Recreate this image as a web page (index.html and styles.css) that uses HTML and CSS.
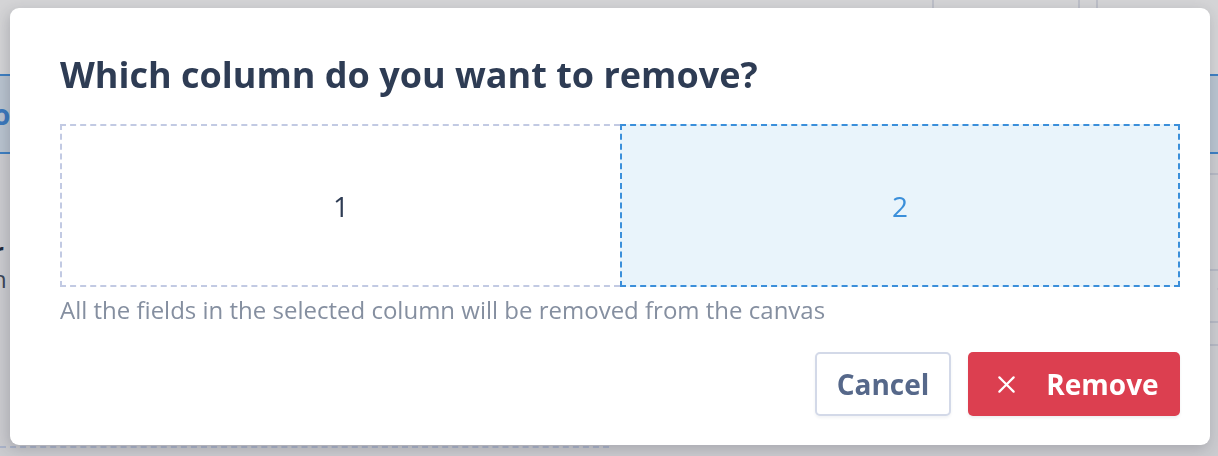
FILE: index.html
```html
<!DOCTYPE html>
<html lang="en">
<head>
<meta charset="utf-8">
<title>Remove column</title>
<link rel="stylesheet" href="styles.css">
</head>
<body>
<div class="page">
  <div class="toprow">
    <div class="cell c1"></div>
    <div class="cell c2"></div>
    <div class="cell c3"></div>
    <div class="cell c4"></div>
  </div>
  <div class="band"><span class="band-text">o</span></div>
  <div class="lower">
    <div class="left-pane">
      <span class="strong">r</span>
      <span class="light">h</span>
    </div>
    <div class="right-pane">
      <div class="row r1"></div>
      <div class="row r2"></div>
      <div class="row r3"><span class="q">?</span></div>
      <div class="row r4"></div>
    </div>
  </div>
</div>

<div class="modal" role="dialog" aria-labelledby="title">
  <h1 id="title" class="modal-title">Which column do you want to remove?</h1>
  <div class="columns">
    <button class="col-option">1</button>
    <button class="col-option selected">2</button>
  </div>
  <p class="hint">All the fields in the selected column will be removed from the canvas</p>
  <div class="actions">
    <button class="btn btn-cancel">Cancel</button>
    <button class="btn btn-remove">
      <svg class="x-icon" viewBox="0 0 20 20" width="19" height="19" aria-hidden="true">
        <path d="M2.5 2.5 L17.5 17.5 M17.5 2.5 L2.5 17.5" stroke="currentColor" stroke-width="2.3" stroke-linecap="round" fill="none"/>
      </svg>
      <span>Remove</span>
    </button>
  </div>
</div>
</body>
</html>
```

FILE: styles.css
```css
* { box-sizing: border-box; }

html, body {
  margin: 0;
  padding: 0;
  height: 100%;
}

body {
  background: #d4d4d6;
  font-family: "Open Sans", "Noto Sans", "Liberation Sans", sans-serif;
  overflow: hidden;
}

/* ---------- backdrop page (dimmed) ---------- */
.page {
  height: 456px;
  display: flex;
  flex-direction: column;
}

.toprow {
  height: 74px;
  display: flex;
}
.cell { border-right: 2px solid #bdbfc8; height: 100%; }
.c1 { width: 934px; }
.c2 { width: 146px; }
.c3 { width: 18px; }
.c4 { flex: 1; border-right: none; }

.band {
  height: 80px;
  background: #b9c3cf;
  border-top: 2px solid #3e7fc2;
  border-bottom: 2px solid #3e7fc2;
  display: flex;
  align-items: center;
}
.band-text {
  margin-left: -7px;
  color: #3a78bd;
  font-weight: 700;
  font-size: 28px;
}

.lower {
  flex: 1;
  display: flex;
  background: #cbcbcf;
}

.left-pane {
  flex: 1;
  display: flex;
  flex-direction: column;
  gap: 6px;
  padding-top: 86px;
  margin-bottom: 8px;
  font-size: 24px;
  line-height: 22px;
  border-bottom: 2px dashed #aab3c9;
}
.strong { color: #1f2a3d; font-weight: 700; margin-left: -7px; }
.light { color: #3a4556; margin-left: -8px; }

.right-pane {
  flex: 1;
  display: flex;
  flex-direction: column;
}
.row { border-bottom: 2px solid #b5b8c3; }
.r1 { height: 21px; }
.r2 { height: 96px; }
.r3 {
  height: 52px;
  display: flex;
  justify-content: flex-end;
  align-items: center;
}
.q {
  color: #3a78bd;
  font-size: 26px;
  font-weight: 700;
  margin-right: -12px;
}
.r4 { height: 23px; }

/* ---------- modal ---------- */
.modal {
  position: fixed;
  left: 10px;
  top: 8px;
  width: 1200px;
  height: 437px;
  background: #ffffff;
  border-radius: 9px;
  box-shadow: -2px 4px 14px rgba(40, 44, 60, 0.22);
  padding: 43px 30px 0 50px;
  display: flex;
  flex-direction: column;
}

.modal-title {
  margin: 0;
  font-size: 36px;
  line-height: 48px;
  font-weight: 700;
  color: #2e3c54;
}

.columns {
  margin-top: 25px;
  height: 163px;
  display: grid;
  grid-template-columns: 1fr 1fr;
}

.col-option {
  font-family: inherit;
  font-size: 28px;
  color: #2e3c54;
  background: #ffffff;
  border: 2px dashed #c2cae3;
  border-right: none;
  cursor: pointer;
  padding: 0;
}
.col-option.selected {
  color: #3b8fda;
  background: #e9f4fb;
  border: 2px dashed #3b8fda;
}

.hint {
  margin: 7px 0 0;
  font-size: 24px;
  line-height: 32px;
  color: #858fa0;
}

.actions {
  margin-top: 26px;
  display: flex;
  justify-content: flex-end;
  gap: 17px;
}

.btn {
  height: 64px;
  border-radius: 5px;
  font-family: inherit;
  font-size: 28px;
  font-weight: 700;
  cursor: pointer;
  display: flex;
  align-items: center;
  justify-content: center;
  padding: 0;
}

.btn-cancel {
  width: 136px;
  background: #ffffff;
  border: 2px solid #d3d9e8;
  color: #56688a;
  box-shadow: 0 2px 3px rgba(40, 50, 80, 0.06);
}

.btn-remove {
  width: 212px;
  padding-left: 8px;
  background: #dc3f50;
  border: none;
  color: #ffffff;
  gap: 30px;
  box-shadow: 0 2px 3px rgba(40, 50, 80, 0.08);
}
.x-icon { display: block; }
```
